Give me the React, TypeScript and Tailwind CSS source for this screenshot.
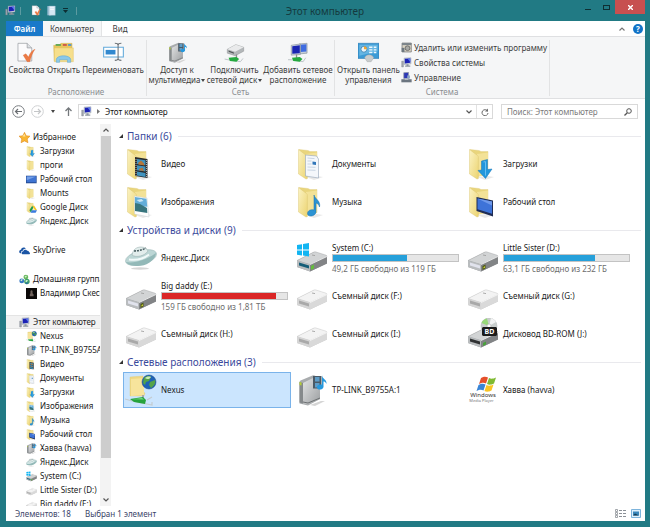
import { useState } from "react";
import type { ReactNode } from "react";

type IconProps = { className?: string };

/* ---------- Icons ---------- */

function Svg({ className = "size-8", box = "0 0 32 32", children }: { className?: string; box?: string; children: ReactNode }) {
    return (
        <svg viewBox={box} className={`${className} shrink-0`} fill="none" aria-hidden="true">
            {children}
        </svg>
    );
}

function Folder({ className, children }: IconProps & { children?: ReactNode }) {
    return (
        <Svg className={className}>
            <defs>
                <linearGradient id="flap" x1="0" y1="0" x2="1" y2="1">
                    <stop offset="0" stopColor="#fbf3c4" />
                    <stop offset="1" stopColor="#ecd471" />
                </linearGradient>
            </defs>
            <path d="M10 29l11-1 6 1-9 3z" fill="#d8d8d8" opacity=".6" />
            <path d="M3 1.500l9 1 2 1h7v23l-11 2z" fill="#e9d57c" stroke="#e0cc80" strokeWidth=".4" />
            <path d="M10 6l11-1.500v22l-11 2z" fill="#f3e297" />
            <path d="M2.500 1.500l8 6c.7.600.9 1 .9 2v21L10 31l-7.500-5z" fill="url(#flap)" stroke="#d9c36c" strokeWidth=".4" />
            {children}
        </Svg>
    );
}

const VideoFolder = ({ className }: IconProps) => (
    <Folder className={className}>
        <path d="M10 9l12.500 2v19L10 28z" fill="#2b2b2b" />
        <path d="M12 11l8.500 1.300v5L12 16zM12 17.300l8.500 1.300v5L12 22.300zM12 23.600l8.500 1.300v4L12 27.600z" fill="#3f93bf" />
        <path d="M13 15l3-2.500 3 3 .5 2-6-1zM14 21l3.500-1.500 1.500 3.500-5-.8z" fill="#b5763a" />
        <path d="M21.600 12v17M11 11v17" stroke="#ddd" strokeWidth=".8" strokeDasharray="1 1" />
    </Folder>
);

const ImageFolder = ({ className }: IconProps) => (
    <Folder className={className}>
        <path d="M9.500 10L22 12l2 19-14.500-3z" fill="#fdfdfd" stroke="#c6ced3" strokeWidth=".5" />
        <path d="M10 11l11.500 1.800.8 8L10 20z" fill="#63add9" />
        <path d="M10 17l5 1 7 4 .3 5-12.300-2z" fill="#38757e" />
        <path d="M11.500 14l5-1 2 2-4 1z" fill="#c8e5f5" />
    </Folder>
);

const DocFolder = ({ className }: IconProps) => (
    <Folder className={className}>
        <path d="M9.500 7l11 1 2 3v19l-13-2z" fill="#f4f7fb" stroke="#94a5b8" strokeWidth=".6" />
        <path d="M11.500 10l7 .6M11.500 13h4M11.500 16h4M11.500 19l8 .3M11.500 22l8 .3" stroke="#c3d0e0" strokeWidth=".9" />
        <path d="M16.500 13.500l3.500.4v3l-3.500-.4z" fill="#3176b9" />
    </Folder>
);

const MusicFolder = ({ className }: IconProps) => (
    <Folder className={className}>
        <path d="M18 9c1 4 7 6 5.500 12-.8-3-2-3.500-3.500-4v9c-.5 4.500-8.500 5.500-8.500 1.500 0-3 3.500-4.500 6.500-3.500z" fill="#2b93d3" stroke="#1770ad" strokeWidth=".5" />
    </Folder>
);

const DownloadFolder = ({ className }: IconProps) => (
    <Folder className={className}>
        <path d="M14.500 13l6-1.500v10l4.500-.5-6.500 9.500L11 22.500l3.500-.5z" fill="#2196dc" stroke="#1275b9" strokeWidth=".5" />
        <path d="M16.500 14l2-.4v14" stroke="#66bdf0" strokeWidth="1" />
    </Folder>
);

const DesktopFolder = ({ className }: IconProps) => (
    <Folder className={className}>
        <path d="M9.500 11l16.500 3.500v16L9.500 25z" fill="#1f2c54" />
        <path d="M10.500 12.500L25 15.500v12.300l-14.500-4.500z" fill="#3e73d8" />
        <path d="M10.500 12.500L25 15.500v4z" fill="#6f99ea" />
    </Folder>
);

const GoogleFolder = ({ className }: IconProps) => (
    <Folder className={className}>
        <path d="M18 11h6l8 13h-6z" fill="#f6c31d" />
        <path d="M18 11l3 6-7 13-4-6z" fill="#1b9b56" />
        <path d="M17 24h15l-4 7H13z" fill="#3a7be0" />
    </Folder>
);

const PlainFolder = ({ className }: IconProps) => <Folder className={className} />;

const NetFolder = ({ className }: IconProps) => (
    <Svg className={className}>
        <path d="M5 3l13-1v16l2 1-1 3H5z" fill="#eed783" stroke="#dfc977" strokeWidth=".4" />
        <path d="M6 5l13-1v17L6 22z" fill="#f7e49c" />
        <circle cx="24" cy="8" r="7" fill="#1f62b5" stroke="#194681" strokeWidth=".5" />
        <path d="M19 4c3-3 6-2 7-1l-2 4-3 1-1 3-2-2zM25 8l5-2c1 3-1 6-4 8l-2-3z" fill="#54a348" />
        <path d="M20 4c1-1 4-2 6-1-1 2-4 3-6 1z" fill="#c9eab9" />
        <path d="M18 21v5" stroke="#aaa" strokeWidth="2" />
        <path d="M0 25l7 2 20 4v-3M22 26l5-3" stroke="#c4ccd0" strokeWidth="1.200" />
        <path d="M5 25l13-2 3 3-1 4-11-2z" fill="#26a33d" />
        <path d="M7 25.300l10-1.300 2 1.500z" fill="#79dc82" />
    </Svg>
);

const MediaServer = ({ className }: IconProps) => (
    <Svg className={className}>
        <defs>
            <linearGradient id="metal" x1="0" y1="0" x2="1" y2="1">
                <stop offset="0" stopColor="#e3e4e5" />
                <stop offset="1" stopColor="#9b9ea0" />
            </linearGradient>
        </defs>
        <path d="M14 31l11-4 4 0-10 5z" fill="#d5d5d5" />
        <path d="M3.500 8q0-1 1-1.500l12-5q1-.5 2 0L24 4v21l-12 6.500-8.500-2z" fill="#a9acae" />
        <path d="M7 9l12-6 5 1.500V25l-12 5.500-5-1z" fill="url(#metal)" />
        <path d="M3.500 8l3.500 1v20.500l-3.500-1z" fill="#85898b" />
        <path d="M7 28l5 1 12-5" stroke="#6d7173" strokeWidth="1" />
        <path d="M3.500 8l2 .5v3l-2-.5z" fill="#b6cf35" />
        <path d="M17 2h8.500v12.500H17z" fill="#4b5a66" />
        <path d="M19 3h4.500v4.500H19zM19 9h4.500v4.500H19z" fill="#5f9cc6" />
        <path d="M26 1c0 4 5 4 4.500 9-1-2-2-2.500-3-2.500V13c-1 3.500-7 3.500-6.500-.3.600-2 3-2.500 5-2z" fill="#2698dd" />
    </Svg>
);

const Saucer = ({ className }: IconProps) => (
    <Svg className={className}>
        <ellipse cx="15" cy="26.500" rx="9" ry="1.200" fill="#bbb" opacity=".6" />
        <ellipse cx="16" cy="15.500" rx="16" ry="7" transform="rotate(-15 16 15.500)" fill="#bcd6d5" stroke="#9ab5b5" strokeWidth=".5" />
        <path d="M1 20c8 2 22-3 30-9-1 8-10 13-18 13-6 0-10-1-12-4z" fill="#93b9b8" />
        <path d="M7 13c1-6 5-8 9-8s6 2 7 4c-3 5-12 7-16 4z" fill="#e2edec" stroke="#8fa6a6" strokeWidth=".5" />
        <path d="M9 9c4 0 8-1 12-3" stroke="#4b6063" strokeWidth="1.600" strokeDasharray="2 1" />
        <path d="M4 17.500c7 1 15-1 20-5" stroke="#f2fafa" strokeWidth="2" />
    </Svg>
);

function DriveBody({ front = "#5b5f61", pale = false }: { front?: string; pale?: boolean }) {
    return (
        <>
            <path d="M1 18.500L18 10l13 4v7.500L14 29.500 1 25z" fill={pale ? "#c9c9c9" : "#9b9ea0"} />
            <path d="M1 18.500L18 10q1-.4 2 0l10 3.200q1 .5 1 1.300l-17 8z" fill={pale ? "#f3f3f3" : "#d2d4d5"} stroke={pale ? "#c8c8c8" : "#a9abad"} strokeWidth=".5" />
            <path d="M14 22.500l17-8v7L14 29.500z" fill={pale ? "#d9d9d9" : "#828486"} />
            <path d="M1 18.500l13 4v7L1 25z" fill={pale ? "#d5d5d5" : "#b9bcbe"} />
            <path d="M3 20.500l10 3v3l-10-3z" fill={front} />
            <path d="M14 22.500l17-8" stroke="#fafafa" strokeWidth=".8" />
            <path d="M16 13l3 .6" stroke="#999" strokeWidth=".8" />
        </>
    );
}

const SystemDrive = ({ className }: IconProps) => (
    <Svg className={className}>
        <DriveBody front="#155d78" />
        <path d="M15 24l3-1.500v4L15 28z" fill="#64bd3d" />
        <path d="M1 3l5-.8V7.500H1zM7 2l6-.9v6.400H7zM1 8.500h5v5L1 12.800zM7 8.500h6v6l-6-.9z" fill="#12b5f2" />
    </Svg>
);

const HardDrive = ({ className }: IconProps) => (
    <Svg className={className}>
        <DriveBody front="#e1e3ed" />
        <path d="M15.500 24l3-1.500v4l-3 1.500z" fill="#4d5713" />
        <path d="M16.500 25l1.500-.8v1.500l-1.500.8z" fill="#cfd938" />
    </Svg>
);

const Removable = ({ className }: IconProps) => (
    <Svg className={className}>
        <DriveBody front="#a9a9a9" pale />
    </Svg>
);

const BdDrive = ({ className }: IconProps) => (
    <Svg className={className}>
        <DriveBody front="#303233" />
        <path d="M16 25l3-1.500v3L16 28z" fill="#48a23a" />
        <circle cx="22" cy="8" r="8" fill="#c9cecd" stroke="#b4b7b6" strokeWidth=".5" />
        <path d="M22 8L14.500 5A8 8 0 0 1 20 .5z" fill="#98d87a" />
        <path d="M22 8l2-8a8 8 0 0 1 5 4z" fill="#f2f3f3" />
        <circle cx="22" cy="8" r="2" fill="#fff" stroke="#a0a0a0" strokeWidth=".5" />
        <path d="M15 10l1-1h13l1 1v7l-1 1H16l-1-1z" fill="#1b1b1b" />
        <text x="22.500" y="16" textAnchor="middle" fontSize="7" fontWeight="700" fill="#fff">BD</text>
    </Svg>
);

const MediaPlayer = ({ className }: IconProps) => (
    <Svg className={className}>
        <path d="M14 4c3-2 5-1.500 7-.5l-2 6c-2-1-4-1-7 .5z" fill="#e5502b" />
        <path d="M22 4c2 1 4 1 7-.5l-2 6c-3 1.500-5 1.500-7 .5z" fill="#7fba32" />
        <path d="M11.500 11c3-2 5-1.500 7-.5l-2 6c-2-1-4-1-7 .5z" fill="#3a85d6" />
        <path d="M19.500 11c2 1 4 1 7-.5l-2 6c-3 1.500-5 1.500-7 .5z" fill="#f9c423" />
        <text x="16" y="22.500" textAnchor="middle" fontSize="6" fill="#333">Windows</text>
        <text x="14.500" y="27.500" textAnchor="middle" fontSize="4" fill="#777">Media Player</text>
    </Svg>
);

const Pc = ({ className = "size-[11px]" }: IconProps) => (
    <Svg className={className}>
        <path d="M2 12h5v17H2z" fill="#a4a9b0" stroke="#6c7580" />
        <path d="M9 3l20-1v18l-20 2z" fill="#cdd5df" stroke="#7d8791" />
        <path d="M11 5l16-1v13l-16 2z" fill="#1c22b5" />
        <path d="M19 4.500l8-.5v11z" fill="#5a7aea" />
        <path d="M16 21h6v4h5v3H12v-3h4z" fill="#8d96a0" />
    </Svg>
);

const SmallMonitor = ({ className }: IconProps) => (
    <Svg className={className}>
        <path d="M0 5h31v22H0z" fill="#244b94" />
        <path d="M2 7h27v17H2z" fill="#3f74d2" />
        <path d="M2 7h27L2 18z" fill="#75a0e8" />
    </Svg>
);

const Star = ({ className }: IconProps) => (
    <Svg className={className}>
        <path d="M16 1l5 10 11 1-8 8 2 11-10-5-10 5 2-11-8-8 11-1z" fill="#f9b633" stroke="#dc8013" strokeWidth="1.500" />
        <path d="M16 5l3 8H10z" fill="#ffe39a" />
    </Svg>
);

const Cloud = ({ className }: IconProps) => (
    <Svg className={className}>
        <path d="M1 21c-2-5 3-7 5-7 1-7 10-9 14-3-6-1-9 3-9 6-4 0-6 4-5 7-3 0-5-1-5-3z" fill="#1b55a5" />
        <path d="M12 27c-6 0-6-8 0-8 1-7 10-7 12-2 4-1 5 2 5 4 4 0 4 6 0 6z" fill="#1b55a5" />
    </Svg>
);

const HomeGroup = ({ className }: IconProps) => (
    <Svg className={className}>
        <circle cx="20" cy="9" r="7" fill="#69b85d" />
        <circle cx="8" cy="20" r="7" fill="#3477c3" />
        <circle cx="23" cy="22" r="8" fill="#3f9f6c" />
        <path d="M16 8c2-3 5-4 7-2l-3 5zM4 19c1-3 4-4 7-3l-3 5zM18 21c2-4 5-4 8-2l-4 5z" fill="#d0f0cf" />
        <path d="M18 26l10-2-5 6z" fill="#2463ae" />
    </Svg>
);

const Avatar = ({ className }: IconProps) => (
    <Svg className={className}>
        <path d="M0 0h32v32H0z" fill="#0b0909" />
        <path d="M13 9c1-3 6-3 6 0v6l3 4v5H11v-5l2-4z" fill="#6f625c" />
    </Svg>
);

const Sheet = ({ className }: IconProps) => (
    <Svg className={className}>
        <path d="M3 2h14l7 7v20H3z" fill="#fbfbfc" stroke="#8f9499" strokeWidth="1" />
        <path d="M17 2v7h7" fill="#dde0e3" stroke="#8f9499" strokeWidth="1" />
        <path d="M11 20l4-2 4 5c2-6 5-10 10-12-4 5-6 12-8 19h-4z" fill="#ec7b45" stroke="#d46634" strokeWidth=".5" />
    </Svg>
);

const NewFolder = ({ className }: IconProps) => (
    <Svg className={className}>
        <path d="M4 3h11v27H4z" fill="#9cbfd5" />
        <path d="M9 3h18v27H9z" fill="#d5e7f3" stroke="#92afc2" />
        <path d="M12 8h11M12 13h11" stroke="#fff" strokeWidth="2" />
    </Svg>
);

const OpenFolder = ({ className }: IconProps) => (
    <Svg className={className}>
        <path d="M1 5h9l2-3h17v27H2z" fill="#e8c65c" stroke="#cfaa43" strokeWidth=".6" />
        <path d="M4 3h8v3H4z" fill="#65a957" />
        <path d="M15 3h6v3h-6z" fill="#ce5c4b" />
        <path d="M23 3h5v3h-5z" fill="#5898c9" />
        <path d="M2 9h29v21H2z" fill="#f6df8c" stroke="#dcbc5b" strokeWidth=".6" />
        <path d="M5 31v-4c0-8 22-8 22 0v4h-5v-4H10v4z" fill="#8ac8e9" stroke="#5ea6cf" strokeWidth=".8" />
    </Svg>
);

const Rename = ({ className }: IconProps) => (
    <Svg className={className}>
        <path d="M1 8h30v15H1z" fill="#fff" stroke="#62a9da" strokeWidth="1.600" />
        <path d="M4 12h15v7H4z" fill="#3188cf" />
        <path d="M18 2c4 0 5 1 5 3 0-2 1-3 5-3M23 4v22M18 28c4 0 5-1 5-3 0 2 1 3 5 3" stroke="#6b7075" strokeWidth="1.600" />
    </Svg>
);

const NetDrive = ({ className }: IconProps) => (
    <Svg className={className}>
        <path d="M5 11l13-7 12 4v6l-13 7-12-4z" fill="#b3b7b9" stroke="#7e8284" strokeWidth=".6" />
        <path d="M5 11l13-7 12 4-13 7z" fill="#e9eaeb" />
        <path d="M7 13l8 3v2l-8-3z" fill="#505557" />
        <path d="M19 19v6" stroke="#8c8c8c" strokeWidth="2" />
        <path d="M1 26l5 1 19 3 4-5" stroke="#bdc4c8" strokeWidth="1.500" />
        <path d="M7 24l12-1 4 3-4 4-10-1z" fill="#25a93f" />
    </Svg>
);

const NetPlace = ({ className }: IconProps) => (
    <Svg className={className}>
        <path d="M17 3l12-1v15l-10 1z" fill="#c6ced8" stroke="#87919c" />
        <path d="M19 4l9-.6v11l-9 1z" fill="#3f6ce0" />
        <path d="M5 5l14-2v16l-14 1z" fill="#d0d7df" stroke="#87919c" />
        <path d="M6.500 6.500L18 5v12l-11.500 1z" fill="#1a25b2" />
        <path d="M13 19v6" stroke="#8c8c8c" strokeWidth="2" />
        <path d="M0 27l5 0 18 3 4-6" stroke="#bdc4c8" strokeWidth="1.500" />
        <path d="M6 24l12-1 4 3-4 4-10-1z" fill="#25a93f" />
    </Svg>
);

const ControlPanel = ({ className }: IconProps) => (
    <Svg className={className}>
        <path d="M0 2h32v23H0z" fill="#3c9bd6" stroke="#2a7cb4" />
        <path d="M2 4h28v10L2 21z" fill="#65b5e3" />
        <circle cx="9" cy="11" r="4.500" fill="#e9f4fa" stroke="#1d6ba0" />
        <path d="M9 11V6.500a4.500 4.500 0 0 1 4.500 4.500z" fill="#f2a632" />
        <path d="M17 8h5M17 12h5M17 16h5M24 8h4M24 12h4M24 16h4" stroke="#eef8fd" strokeWidth="2" />
        <path d="M10 24c2-6 12-6 14 0l-4 6h-6z" fill="#c9cccd" stroke="#999da0" strokeWidth=".6" />
    </Svg>
);

const Programs = ({ className }: IconProps) => (
    <Svg className={className}>
        <path d="M3 3h27v26H3z" fill="#d8d3c4" stroke="#6d6f70" strokeWidth="2" />
        <path d="M3 3h27v6H3z" fill="#7c858c" />
        <circle cx="19" cy="18" r="7" fill="#a9aaa6" stroke="#555" strokeWidth="2" />
        <path d="M2 17h8v12H2z" fill="#6c7780" />
    </Svg>
);

const Manage = ({ className }: IconProps) => (
    <Svg className={className}>
        <path d="M8 2l14-1v18H8z" fill="#2c38b5" stroke="#949ba3" strokeWidth="2" />
        <path d="M18 10h8v9h-8z" fill="#8aa4c6" />
        <path d="M1 21h30v9H1z" fill="#6b7580" />
        <path d="M11 19h10v4H11z" fill="#b8bec4" />
    </Svg>
);

const Caret = () => (
    <Svg className="w-[4px] h-[3px]" box="0 0 4 3">
        <path d="M0 0h4L2 3z" fill="#444" />
    </Svg>
);

/* ---------- Data ---------- */

type TreeItem = { name: string; icon: (p: IconProps) => ReactNode; root?: boolean };

const tree: TreeItem[][] = [
    [
        { name: "Избранное", icon: Star, root: true },
        { name: "Загрузки", icon: DownloadFolder },
        { name: "проги", icon: PlainFolder },
        { name: "Рабочий стол", icon: SmallMonitor },
        { name: "Mounts", icon: PlainFolder },
        { name: "Google Диск", icon: GoogleFolder },
        { name: "Яндекс.Диск", icon: Saucer },
    ],
    [{ name: "SkyDrive", icon: Cloud, root: true }],
    [
        { name: "Домашняя группа", icon: HomeGroup, root: true },
        { name: "Владимир Скессоров", icon: Avatar },
    ],
    [
        { name: "Этот компьютер", icon: Pc, root: true },
        { name: "Nexus", icon: NetFolder },
        { name: "TP-LINK_B9755A:1", icon: MediaServer },
        { name: "Видео", icon: VideoFolder },
        { name: "Документы", icon: DocFolder },
        { name: "Загрузки", icon: DownloadFolder },
        { name: "Изображения", icon: ImageFolder },
        { name: "Музыка", icon: MusicFolder },
        { name: "Рабочий стол", icon: DesktopFolder },
        { name: "Хавва (havva)", icon: MediaServer },
        { name: "Яндекс.Диск", icon: Saucer },
        { name: "System (C:)", icon: SystemDrive },
        { name: "Little Sister (D:)", icon: Removable },
        { name: "Big daddy (E:)", icon: Removable },
    ],
];

type Item = { name: string; icon: (p: IconProps) => ReactNode; used?: number; info?: string; full?: boolean };

const sections: { title: string; items: Item[] }[] = [
    {
        title: "Папки",
        items: [
            { name: "Видео", icon: VideoFolder },
            { name: "Документы", icon: DocFolder },
            { name: "Загрузки", icon: DownloadFolder },
            { name: "Изображения", icon: ImageFolder },
            { name: "Музыка", icon: MusicFolder },
            { name: "Рабочий стол", icon: DesktopFolder },
        ],
    },
    {
        title: "Устройства и диски",
        items: [
            { name: "Яндекс.Диск", icon: Saucer },
            { name: "System (C:)", icon: SystemDrive, used: 59, info: "49,2 ГБ свободно из 119 ГБ" },
            { name: "Little Sister (D:)", icon: HardDrive, used: 73, info: "63,1 ГБ свободно из 232 ГБ" },
            { name: "Big daddy (E:)", icon: HardDrive, used: 91, info: "159 ГБ свободно из 1,81 ТБ", full: true },
            { name: "Съемный диск (F:)", icon: Removable },
            { name: "Съемный диск (G:)", icon: Removable },
            { name: "Съемный диск (H:)", icon: Removable },
            { name: "Съемный диск (I:)", icon: Removable },
            { name: "Дисковод BD-ROM (J:)", icon: BdDrive },
        ],
    },
    {
        title: "Сетевые расположения",
        items: [
            { name: "Nexus", icon: NetFolder },
            { name: "TP-LINK_B9755A:1", icon: MediaServer },
            { name: "Хавва (havva)", icon: MediaPlayer },
        ],
    },
];

/* ---------- Parts ---------- */

function TitleBar() {
    return (
        <header className="flex h-[21px] shrink-0 items-center px-[5px]">
            <div className="flex flex-1 items-center">
                <Pc className="size-[11px]" />
                <span className="mx-1 h-2 w-px bg-[#5c9ba1]" />
                <button aria-label="Свойства" className="ml-1.5"><Sheet className="size-[11px]" /></button>
                <button aria-label="Новая папка" className="ml-1"><NewFolder className="size-[11px]" /></button>
                <button aria-label="Настройка панели" className="ml-1.5">
                    <Svg className="w-[5px] h-[5px]" box="0 0 5 5">
                        <path d="M0 0h5v1H0zM0 2h5L2.500 5z" fill="#0d2e32" />
                    </Svg>
                </button>
                <span className="ml-2 h-2 w-px bg-[#5c9ba1]" />
            </div>
            <h1 className="text-[10px] text-[#153a3f]">Этот компьютер</h1>
            <div className="flex flex-1 items-start justify-end self-stretch">
                <button aria-label="Свернуть" className="flex h-[14px] w-[18px] items-end justify-center pb-[4px]">
                    <span className="h-px w-[6px] bg-[#0f2f33]" />
                </button>
                <button aria-label="Развернуть" className="flex h-[14px] w-[18px] items-center justify-center">
                    <span className="h-[5px] w-[7px] border border-[#0f2f33]" />
                </button>
                <button aria-label="Закрыть" className="flex h-[14px] w-[30px] items-center justify-center bg-[#c75050]">
                    <Svg className="size-[5px]" box="0 0 5 5">
                        <path d="M0 0l5 5M5 0L0 5" stroke="#fff" strokeWidth="1.400" />
                    </Svg>
                </button>
            </div>
        </header>
    );
}

function Tabs() {
    return (
        <nav className="flex h-[15px] shrink-0 items-stretch bg-white text-[#3c3c3c]">
            <button className="w-[37px] bg-[#1979ca] font-semibold text-white">Файл</button>
            <button className="w-[59px] border-r border-[#e3e4e5] bg-[#f5f6f7]">Компьютер</button>
            <button className="w-[36px]">Вид</button>
            <div className="ml-auto flex items-center gap-2 pr-[2px]">
                <button aria-label="Свернуть ленту">
                    <Svg className="w-[6px] h-[4px]" box="0 0 6 4">
                        <path d="M.5 3.500L3 1l2.500 2.500" stroke="#777" strokeWidth="1.200" />
                    </Svg>
                </button>
                <button aria-label="Справка" className="flex size-[10px] items-center justify-center rounded-full bg-[#1173c7] font-bold text-white">?</button>
            </div>
        </nav>
    );
}

function BigButton({ icon, lines, width, drop }: { icon: ReactNode; lines: string[]; width: string; drop?: boolean }) {
    return (
        <button className={`${width} flex shrink-0 flex-col items-center whitespace-nowrap leading-[10px]`}>
            {icon}
            <span className="mt-[2px]">{lines[0]}</span>
            {lines[1] && (
                <span className="flex items-center gap-px">
                    {lines[1]}
                    {drop && <Caret />}
                </span>
            )}
        </button>
    );
}

function Group({ label, children }: { label: string; children: ReactNode }) {
    return (
        <div className="mb-[2px] mt-[3px] flex flex-col justify-between border-r border-[#e2e3e4] px-px pt-[2px]">
            <div className="flex items-start">{children}</div>
            <div className="text-center leading-[9px] text-[#8a8d91]">{label}</div>
        </div>
    );
}

function Ribbon() {
    const size = "size-[21px]";
    return (
        <div className="flex h-[63px] shrink-0 overflow-hidden border-y border-[#dfe0e2] bg-[#f5f6f7] text-[#3c3c3c]">
            <Group label="Расположение">
                <BigButton width="w-[39px]" icon={<Sheet className={size} />} lines={["Свойства"]} />
                <BigButton width="w-[35px]" icon={<OpenFolder className={size} />} lines={["Открыть"]} />
                <BigButton width="w-[64px]" icon={<Rename className={size} />} lines={["Переименовать"]} />
            </Group>
            <Group label="Сеть">
                <BigButton width="w-[58px]" icon={<MediaServer className={size} />} lines={["Доступ к", "мультимедиа"]} drop />
                <BigButton width="w-[57px]" icon={<NetDrive className={size} />} lines={["Подключить", "сетевой диск"]} drop />
                <BigButton width="w-[70px]" icon={<NetPlace className={size} />} lines={["Добавить сетевое", "расположение"]} />
            </Group>
            <Group label="Система">
                <BigButton width="w-[65px]" icon={<ControlPanel className={size} />} lines={["Открыть панель", "управления"]} />
                <div className="flex w-[147px] shrink-0 flex-col gap-[4px] whitespace-nowrap leading-[11px]">
                    <button className="flex items-center gap-[2px]"><Programs className="size-[11px]" />Удалить или изменить программу</button>
                    <button className="flex items-center gap-[2px]"><Pc />Свойства системы</button>
                    <button className="flex items-center gap-[2px]"><Manage className="size-[11px]" />Управление</button>
                </div>
            </Group>
        </div>
    );
}

function AddressBar() {
    return (
        <div className="flex h-[25px] shrink-0 items-center bg-white pl-[6px] pr-[7px]">
            <button aria-label="Назад">
                <Svg className="size-[13px]" box="0 0 13 13">
                    <circle cx="6.500" cy="6.500" r="5.800" stroke="#7a7e82" />
                    <path d="M10 6.500H3.500M6 4L3.500 6.500 6 9" stroke="#6a6e72" strokeWidth="1.200" />
                </Svg>
            </button>
            <button aria-label="Вперед" className="ml-[6px]">
                <Svg className="size-[13px]" box="0 0 13 13">
                    <circle cx="6.500" cy="6.500" r="5.800" stroke="#cfd1d3" />
                    <path d="M3 6.500h6.500M7 4l2.500 2.500L7 9" stroke="#c4c6c8" strokeWidth="1.200" />
                </Svg>
            </button>
            <button aria-label="Последние расположения" className="ml-[7px]"><Caret /></button>
            <button aria-label="Вверх" className="ml-[9px] mr-[5px]">
                <Svg className="w-[9px] h-[9px]" box="0 0 9 9">
                    <path d="M4.500 9V1M1.500 4l3-3 3 3" stroke="#74787c" strokeWidth="1.300" />
                </Svg>
            </button>
            <div className="flex h-[15px] min-w-0 flex-1 items-center border border-[#d9d9d9] pl-[2px]">
                <Pc className="size-[11px]" />
                <Svg className="mx-[5px] w-[3px] h-[5px]" box="0 0 3 5">
                    <path d="M0 0l3 2.500L0 5z" fill="#777" />
                </Svg>
                <span className="flex-1 text-[#111]">Этот компьютер</span>
                <button aria-label="Предыдущие адреса" className="px-[4px]">
                    <Svg className="w-[6px] h-[4px]" box="0 0 6 4">
                        <path d="M.5.500L3 3 5.500.500" stroke="#555" strokeWidth="1.200" />
                    </Svg>
                </button>
                <button aria-label="Обновить" className="flex h-full w-[16px] items-center justify-center border-l border-[#e2e2e2]">
                    <Svg className="size-[8px]" box="0 0 8 8">
                        <path d="M6.500 3A3 3 0 1 0 7 5" stroke="#6a6a6a" />
                        <path d="M7 .5V3.500H4z" fill="#6a6a6a" />
                    </Svg>
                </button>
            </div>
            <label className="ml-[8px] flex h-[15px] w-[137px] items-center border border-[#d9d9d9] px-[5px]">
                <input aria-label="Поиск" placeholder="Поиск: Этот компьютер" className="min-w-0 flex-1 outline-none placeholder:text-[#7a7a7a]" />
                <Svg className="size-[8px]" box="0 0 8 8">
                    <circle cx="5" cy="3" r="2.300" stroke="#555" />
                    <path d="M3.300 4.700L.5 7.500" stroke="#555" strokeWidth="1.300" />
                </Svg>
            </label>
        </div>
    );
}

function Sidebar() {
    return (
        <aside className="flex w-[105px] shrink-0 overflow-hidden">
            <div className="flex min-w-0 flex-1 flex-col gap-[15px] overflow-hidden pt-[6px]">
                {tree.map((group) => (
                    <ul key={group[0].name}>
                        {group.map((item) => {
                            const Icon = item.icon;
                            return (
                                <li key={item.name}>
                                    <button
                                        className={`flex h-[14px] w-full items-center gap-[3px] whitespace-nowrap ${item.root ? "pl-[13px]" : "pl-[20px]"} ${
                                            item.name === "Этот компьютер" ? "border-y border-[#e4e4e4] bg-[#f2f2f2]" : ""
                                        }`}
                                    >
                                        <Icon className="size-[11px]" />
                                        {item.name}
                                    </button>
                                </li>
                            );
                        })}
                    </ul>
                ))}
            </div>
            {/* scrollbar */}
            <div className="flex w-[11px] shrink-0 flex-col items-center bg-[#f3f3f3]">
                <Svg className="my-[4px] w-[6px] h-[4px]" box="0 0 6 4">
                    <path d="M.5 3.500L3 1l2.500 2.500" stroke="#555" strokeWidth="1.200" />
                </Svg>
                <div className="w-[10px] grow-[322] bg-[#cdcdcd]" />
                <div className="grow-[36]" />
                <Svg className="my-[4px] w-[6px] h-[4px]" box="0 0 6 4">
                    <path d="M.5.500L3 3 5.500.500" stroke="#555" strokeWidth="1.200" />
                </Svg>
            </div>
        </aside>
    );
}

function Tile({ item, selected, onSelect }: { item: Item; selected: boolean; onSelect: () => void }) {
    const Icon = item.icon;
    return (
        <button
            onClick={onSelect}
            className={`flex h-[36px] items-center gap-[4px] border pl-px text-left ${selected ? "border-[#7ab3ea] bg-[#cbe5fe]" : "border-transparent"}`}
        >
            <Icon className="size-8" />
            {item.used === undefined ? (
                <span>{item.name}</span>
            ) : (
                <span className="flex w-[127px] flex-col gap-px leading-[11px]">
                    <span>{item.name}</span>
                    <span className="flex h-[8px] border border-[#c3c3c3] bg-[#e6e6e6]">
                        <span className={item.full ? "bg-[#da2626]" : "bg-[#26a0da]"} style={{ width: `${item.used}%` }} />
                    </span>
                    <span className="text-[#6d6d6d]">{item.info}</span>
                </span>
            )}
        </button>
    );
}

export default function App() {
    const [selected, setSelected] = useState("Nexus");

    return (
        <div className="flex h-screen flex-col bg-[#217a84] font-['Noto_Sans','Liberation_Sans',sans-serif] text-[8px] leading-[12px] text-[#1a1a1a]">
            <TitleBar />
            <div className="mb-[6px] ml-[6px] mr-[5px] flex min-h-0 flex-1 flex-col bg-white">
                <Tabs />
                <Ribbon />
                <AddressBar />
                <div className="flex min-h-0 flex-1">
                    <Sidebar />
                    <main className="flex min-w-0 flex-1 flex-col gap-px overflow-hidden pl-[8px] pr-[4px] pt-[3px]">
                        {sections.map((section) => (
                            <section key={section.title}>
                                <h2 className="mb-px flex h-[18px] items-center text-[10px] text-[#3b4a9c]">
                                    <Svg className="mr-[4px] size-[4px]" box="0 0 4 4">
                                        <path d="M4 0v4H0z" fill="#333" />
                                    </Svg>
                                    {section.title} ({section.items.length})
                                    <span className="ml-[6px] h-px flex-1 bg-[#e9e9ed]" />
                                </h2>
                                <div className="ml-[4px] grid grid-cols-[repeat(auto-fill,168px)] gap-x-[3px] gap-y-[2px]">
                                    {section.items.map((item) => (
                                        <Tile key={item.name} item={item} selected={selected === item.name} onSelect={() => setSelected(item.name)} />
                                    ))}
                                </div>
                            </section>
                        ))}
                    </main>
                </div>
                <footer className="flex h-[15px] shrink-0 items-center gap-[14px] pl-[9px] pr-[4px] text-[#3a4468]">
                    <span>Элементов: 18</span>
                    <span>Выбран 1 элемент</span>
                    <div className="ml-auto flex items-center gap-[5px]">
                        <button aria-label="Таблица">
                            <Svg className="w-[11px] h-[9px]" box="0 0 11 9">
                                <path d="M.5.500h2v2h-2zM.5 3.500h2v2h-2zM.5 6.500h2v2h-2z" stroke="#8a8f96" strokeWidth=".8" />
                                <path d="M4 1.500h7M4 4.500h7M4 7.500h7" stroke="#8a8f96" strokeDasharray="3 1" />
                            </Svg>
                        </button>
                        <button aria-label="Крупные значки">
                            <Svg className="w-[10px] h-[9px]" box="0 0 10 9">
                                <path d="M.5.500h9v8h-9z" fill="#dff0fb" stroke="#7db4dc" />
                                <path d="M2 2.500h6v4H2z" fill="#3a87bb" />
                                <path d="M2 6.500l2-2 4 2z" fill="#123c55" />
                            </Svg>
                        </button>
                    </div>
                </footer>
            </div>
        </div>
    );
}
